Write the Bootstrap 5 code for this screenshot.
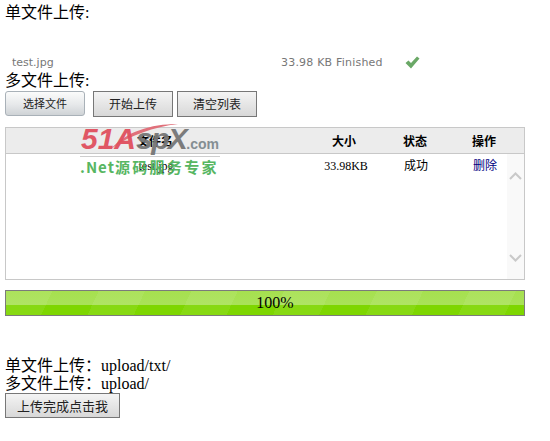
<!DOCTYPE html>
<html lang="zh-CN">
<head>
  <meta charset="UTF-8" />
  <meta name="viewport" content="width=device-width, initial-scale=1.0"/>
  <title>文件上传</title>
  <link href="https://cdn.jsdelivr.net/npm/bootstrap@5.3.3/dist/css/bootstrap.min.css" rel="stylesheet">
  <style>
    body { font-family: "Liberation Serif", "Noto Sans CJK SC", serif; font-size: 16px; line-height: 18px; color: #000; background: #fff; padding: 4px 25px 0 5px; position: relative; }
    .upload-line { height: 18px; }
    .queue-row { height: 18px; margin-top: 32px; padding-left: 7px; font: 11px/18px "DejaVu Sans", sans-serif; color: #777; }
    .queue-name { width: 269px; }
    .queue-size { width: 124px; letter-spacing: .2px; }
    .queue-check { margin-top: 2px; }
    .btn-row { margin-top: 1px; height: 26px; }
    .up-btn { font: 12px/1 "Noto Sans CJK SC", sans-serif; color: #222; height: 26px; padding: 0; background: linear-gradient(#f4f4f4, #d8d8d8); border: 1px solid #777; border-radius: 0; }
    .up-btn-select { width: 80px; height: 25px; font-size: 11px; border-color: #a9b1b8; border-radius: 3px; background: linear-gradient(#fbfbfb, #e6e8ea 55%, #cfd3d6); }
    .up-btn-plain { width: 80px; margin-left: 8px; }
    .up-btn-plain + .up-btn-plain { margin-left: 4px; }
    .up-btn-done { width: 115px; height: 25px; font-size: 13px; }
    .file-box { margin-top: 10px; height: 153px; border: 1px solid #c8c8c8; }
    .file-head { height: 26px; background: #ececec; border-bottom: 1px solid #c8c8c8; font: bold 12px/25px "Noto Sans CJK SC", sans-serif; }
    .file-row { font-size: 12px; line-height: 24px; }
    .cell-name { flex: 0 0 300px; text-align: center; }
    .cell-size { flex: 0 0 80px; text-align: center; }
    .cell-state { flex: 0 0 62px; text-align: center; }
    .cell-op { flex: 0 0 76px; text-align: center; }
    .file-head .cell-name { flex-basis: 298px; }
    .file-row .cell-state { margin-left: -1px; }
    .file-row a { color: #00007f; text-decoration: none; }
    .file-body { height: 125px; position: relative; }
    .file-rows { flex: 1 1 auto; }
    .fake-scroll { position: absolute; right: 0; top: 0; bottom: 0; width: 17px; background: #f9f9f9; padding: 18px 0 17px; }
    .progress-box { margin-top: 10px; height: 26px; padding-left: 20px; border: 1px solid #7b7b7b; text-align: center; line-height: 24px; background:
      repeating-linear-gradient(115deg, rgba(255,255,255,.07) 0 42px, rgba(255,255,255,0) 42px 84px),
      linear-gradient(#a6e04f 0, #a9e258 58%, #7ed600 60%, #7ed600 100%); }
    .result-block { margin-top: 41px; }
    .watermark { position: absolute; left: 80px; top: 122px; width: 140px; height: 58px; pointer-events: none; }
    .wm-swoosh { position: absolute; left: 30px; top: 0; }
    .wm-top { height: 33px; padding-left: 1px; font: italic bold 30px/33px "Liberation Sans", sans-serif; color: #e0505e; opacity: .95; white-space: nowrap; }
    .wm-top span { color: #777; letter-spacing: -1.6px; }
    .wm-top small { font: bold 14px "Liberation Sans", sans-serif; color: #7f8a8f; }
    .wm-bottom { margin-top: 1px; border-top: 1px solid #ccc; font: bold 15px/20px "Noto Sans CJK SC", sans-serif; color: #4fb35a; letter-spacing: 2.3px; white-space: nowrap; opacity: .95; }
    .wm-bottom span { letter-spacing: 1px; }
  </style>
</head>
<body>

<div class="upload-line">单文件上传:</div>
<div class="queue-row d-flex">
  <div class="queue-name">test.jpg</div>
  <div class="queue-size">33.98 KB Finished</div>
  <svg class="queue-check" width="15" height="13" viewBox="0 0 15 13"><path d="M0.5 7 L3.5 4.5 L6 7 L12 0.5 L14.5 2.5 L6 12.5 Z" fill="#6aa866"/></svg>
</div>
<div class="upload-line">多文件上传:</div>
<div class="btn-row d-flex align-items-start">
  <button class="up-btn up-btn-select">选择文件</button>
  <button class="up-btn up-btn-plain">开始上传</button>
  <button class="up-btn up-btn-plain">清空列表</button>
</div>

<div class="file-box">
  <div class="file-head d-flex">
    <div class="cell-name">文件名</div>
    <div class="cell-size">大小</div>
    <div class="cell-state">状态</div>
    <div class="cell-op">操作</div>
  </div>
  <div class="file-body d-flex">
    <div class="file-rows">
      <div class="file-row d-flex">
        <div class="cell-name">test.jpg</div>
        <div class="cell-size">33.98KB</div>
        <div class="cell-state">成功</div>
        <div class="cell-op"><a href="#">删除</a></div>
      </div>
    </div>
    <div class="fake-scroll d-flex flex-column justify-content-between align-items-center">
      <svg width="13" height="8" viewBox="0 0 13 8"><path d="M1 7 L6.5 1.5 L12 7" fill="none" stroke="#c9c9c9" stroke-width="2"/></svg>
      <svg width="13" height="8" viewBox="0 0 13 8"><path d="M1 1 L6.5 6.5 L12 1" fill="none" stroke="#c9c9c9" stroke-width="2"/></svg>
    </div>
  </div>
</div>

<div class="progress-box">100%</div>

<div class="result-block">
  <div class="upload-line">单文件上传&#xFF1A;upload/txt/</div>
  <div class="upload-line">多文件上传&#xFF1A;upload/</div>
  <button class="up-btn up-btn-done">上传完成点击我</button>
</div>

<!-- watermark sits on top of the table -->
<div class="watermark">
  <svg class="wm-swoosh" width="72" height="28" viewBox="0 0 72 28"><path d="M1 27 C16 10 40 2 68 2 C44 5 20 13 1 27 Z" fill="#e0707a"/></svg>
  <div class="wm-top">51A<span>spX</span><small>.com</small></div>
  <div class="wm-bottom"><span>.Net</span>源码服务专家</div>
</div>

<script src="https://cdn.jsdelivr.net/npm/bootstrap@5.3.3/dist/js/bootstrap.bundle.min.js"></script>
</body>
</html>
